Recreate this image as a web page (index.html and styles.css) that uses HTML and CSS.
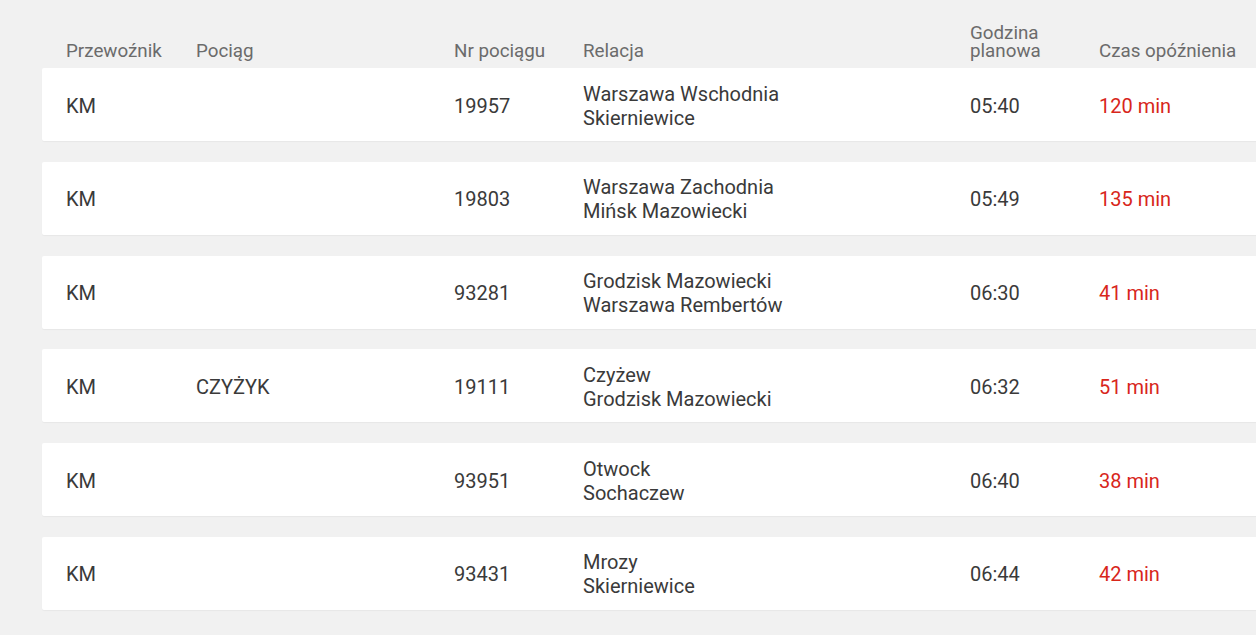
FILE: index.html
```html
<!DOCTYPE html>
<html lang="pl">
<head>
<meta charset="utf-8">
<link rel="stylesheet" href="styles.css">
</head>
<body>
<div class="table">
  <div class="head">
    <div class="c1">Przewoźnik</div>
    <div class="c2">Pociąg</div>
    <div class="c3">Nr pociągu</div>
    <div class="c4">Relacja</div>
    <div class="c5">Godzina<br>planowa</div>
    <div class="c6">Czas opóźnienia</div>
  </div>
  <div class="row">
    <div>KM</div><div></div><div>19957</div>
    <div>Warszawa Wschodnia<br>Skierniewice</div>
    <div>05:40</div><div class="delay">120 min</div>
  </div>
  <div class="row">
    <div>KM</div><div></div><div>19803</div>
    <div>Warszawa Zachodnia<br>Mińsk Mazowiecki</div>
    <div>05:49</div><div class="delay">135 min</div>
  </div>
  <div class="row">
    <div>KM</div><div></div><div>93281</div>
    <div>Grodzisk Mazowiecki<br>Warszawa Rembertów</div>
    <div>06:30</div><div class="delay">41 min</div>
  </div>
  <div class="row">
    <div>KM</div><div>CZYŻYK</div><div>19111</div>
    <div>Czyżew<br>Grodzisk Mazowiecki</div>
    <div>06:32</div><div class="delay">51 min</div>
  </div>
  <div class="row">
    <div>KM</div><div></div><div>93951</div>
    <div>Otwock<br>Sochaczew</div>
    <div>06:40</div><div class="delay">38 min</div>
  </div>
  <div class="row">
    <div>KM</div><div></div><div>93431</div>
    <div>Mrozy<br>Skierniewice</div>
    <div>06:44</div><div class="delay">42 min</div>
  </div>
</div>
</body>
</html>
```
FILE: styles.css
```css
html, body {
  margin: 0;
  padding: 0;
  background: #f1f1f1;
  overflow: hidden;
}
body {
  font-family: Roboto, "Liberation Sans", sans-serif;
}
.table {
  margin-left: 42px;
  padding-top: 25px;
  width: 1260px;
}
.head, .row {
  display: grid;
  grid-template-columns: 130px 258px 129px 387px 129px 1fr;
  padding-left: 24px;
}
.head {
  align-items: end;
  color: #6b6b6b;
  font-size: 18.8px;
  line-height: 17.5px;
  padding-bottom: 8px;
}
.row {
  box-sizing: border-box;
  background: #fff;
  align-items: center;
  height: 73px;
  padding-top: 2px;
  margin-bottom: 20.8px;
  color: #3a3a3a;
  font-size: 20px;
  line-height: 24px;
  box-shadow: 0 1px 1px rgba(0,0,0,0.04);
  border-radius: 2px;
}
.delay {
  color: #d8261b;
}
```
